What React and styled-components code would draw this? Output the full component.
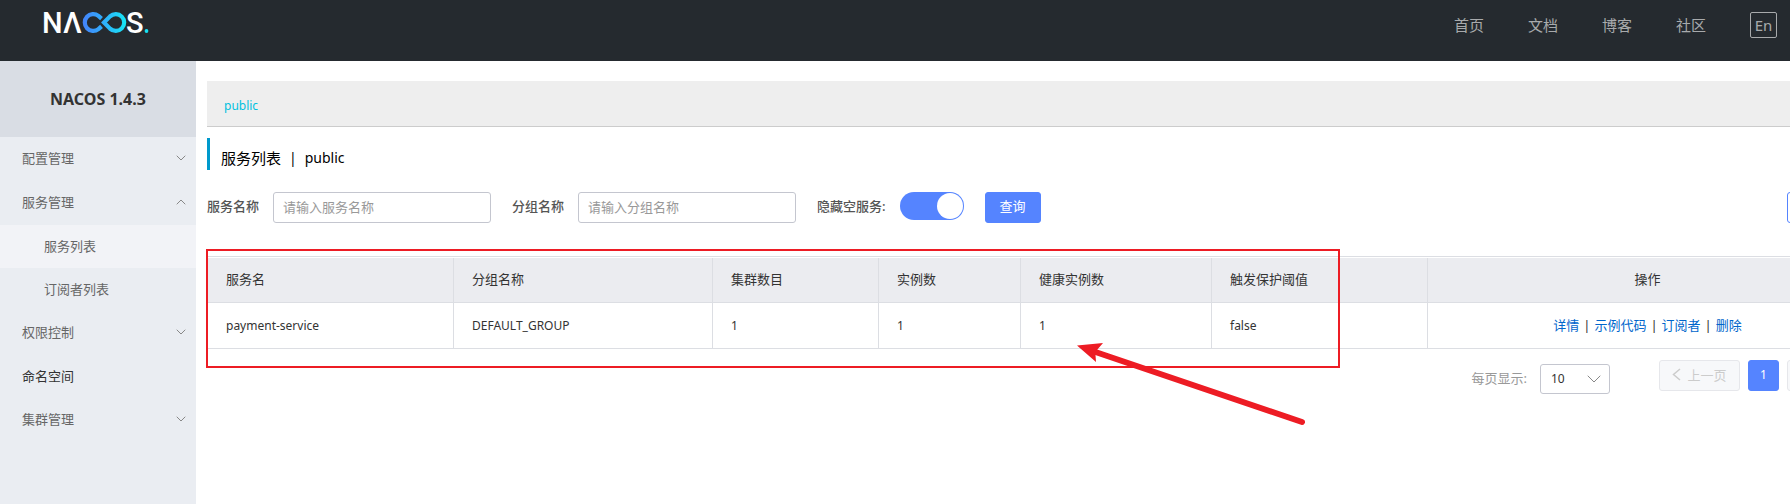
import React from "react";
import styled, { createGlobalStyle, css } from "styled-components";

const GlobalStyle = createGlobalStyle`
  *, *::before, *::after { box-sizing: border-box; }
  body {
    margin: 0;
    background: #fff;
    color: #333;
    font: 12px/20px "Noto Sans", "Noto Sans CJK SC", sans-serif;
  }
  button, input, select { font: inherit; }
  ul { margin: 0; padding: 0; list-style: none; }
  a { text-decoration: none; }
`;

const Page = styled.div`
  display: flex;
  flex-direction: column;
  min-height: 100vh;
  overflow: hidden;
`;

/* Top bar */
const Header = styled.header`
  display: flex;
  align-items: flex-start;
  justify-content: space-between;
  height: 61px;
  padding: 0 13px 0 36px;
  background: #252a2f;
`;

const HeaderNav = styled.nav`
  display: flex;
  align-items: center;
  gap: 44px;
  margin-top: 12px;
`;

const HeaderLink = styled.a`
  font-size: 15px;
  line-height: 26px;
  color: #a8aaac;
`;

const LanguageButton = styled.button`
  width: 27px;
  height: 26px;
  padding: 0;
  border: 1px solid #a8aaac;
  border-radius: 2px;
  background: transparent;
  color: #a8aaac;
  font-size: 15px;
  line-height: 22px;
`;

/* Side menu */
const Body = styled.div`
  display: flex;
  flex: 1;
`;

const Sidebar = styled.aside`
  flex: 0 0 196px;
  background: #eaedf2;
`;

const Version = styled.h1`
  margin: 0;
  background: #d9dde4;
  font-size: 16px;
  font-weight: 700;
  line-height: 76px;
  text-align: center;
`;

const menuRow = css`
  display: flex;
  align-items: center;
  justify-content: space-between;
  width: 100%;
  padding: 0 10px 2px 22px;
  border: 0;
  background: transparent;
  font-size: 13px;
  text-align: left;
`;

const MenuGroup = styled.button`
  ${menuRow}
  height: 44px;
  color: #666;
`;

const MenuLink = styled.a`
  ${menuRow}
  height: 43px;
  padding-left: ${(p) => (p.$nested ? "44px" : "22px")};
  background: ${(p) => (p.$active ? "#f2f3f7" : "transparent")};
  color: ${(p) => (p.$nested ? "#666" : "#333")};
`;

/* Content */
const Main = styled.main`
  flex: 1 0 1672px;
  padding: 20px 0 0 11px;
`;

const NamespaceBar = styled.div`
  display: flex;
  align-items: center;
  height: 46px;
  padding: 5px 17px 0;
  border-bottom: 1px solid #ccc;
  background: #eee;
`;

const NamespaceLink = styled.a`
  color: #00c1de;
`;

const PageTitle = styled.h2`
  display: flex;
  gap: 8px;
  height: 32px;
  margin: 11px 0 22px;
  padding: 6px 0 0 11px;
  border-left: 3px solid #09c;
  color: #000;
  font-size: 14px;
  font-weight: 400;
  line-height: 28px;
`;

const TitleName = styled.span`
  font-size: 15px;
`;

const SearchForm = styled.form`
  display: flex;
  align-items: flex-start;
  height: 31px;
`;

const Field = styled.div`
  display: flex;
  align-items: flex-start;
  gap: 14px;
  margin-right: 21px;
`;

const Label = styled.label`
  color: #555;
  font-size: 13px;
  font-weight: 500;
  line-height: 28px;
`;

const TextInput = styled.input`
  width: 218px;
  height: 31px;
  padding: 0 9px 2px;
  border: 1px solid #c4c6cf;
  border-radius: 3px;
  background: #fff;
  color: #333;
  font-size: 13px;
  outline: 0;
  &::placeholder { color: #999; opacity: 1; }
`;

const Switch = styled.input`
  appearance: none;
  display: flex;
  justify-content: flex-end;
  width: 64px;
  height: 28px;
  margin: 0;
  padding: 1px;
  border-radius: 14px;
  background: #5584ff;
  &::before {
    content: "";
    width: 26px;
    height: 26px;
    border-radius: 50%;
    background: #fff;
  }
`;

const Button = styled.button`
  height: 31px;
  padding: 0 14px 2px;
  border: 1px solid #5584ff;
  border-radius: 3px;
  background: ${(p) => (p.$primary ? "#5584ff" : "#fff")};
  color: ${(p) => (p.$primary ? "#fff" : "#5584ff")};
  font-size: 13px;
  line-height: 27px;
`;

const CreateButton = styled(Button)`
  width: 81px;
  margin-left: auto;
`;

const TableArea = styled.section`
  position: relative;
  margin-top: 33px;
`;

const Table = styled.table`
  width: 100%;
  padding-top: 1px;
  border: 1px solid #dcdee3;
  border-width: 1px 0 0 1px;
  border-spacing: 0;
  table-layout: fixed;
`;

const cell = css`
  padding: 0 18px;
  border: 1px solid #dcdee3;
  border-width: 0 1px 1px 0;
  text-align: ${(p) => (p.$center ? "center" : "left")};
`;

const HeadCell = styled.th`
  ${cell}
  width: ${(p) => (p.$width ? `${p.$width}px` : "auto")};
  height: 45px;
  padding-bottom: 2px;
  background: #ebecf0;
  font-size: 13px;
  font-weight: 400;
`;

const DataCell = styled.td`
  ${cell}
  height: 46px;
`;

const Actions = styled.div`
  display: flex;
  justify-content: center;
  gap: 4px;
  padding-bottom: 2px;
  font-size: 13px;
`;

const ActionLink = styled.a`
  color: #06c;
`;

const Highlight = styled.div`
  position: absolute;
  top: -7px;
  left: -1px;
  width: 1134px;
  height: 119px;
  border: 2px solid #ed1c24;
  pointer-events: none;
`;

const Arrow = styled.svg`
  position: absolute;
  top: 84px;
  left: 868px;
  pointer-events: none;
`;

const Pagination = styled.nav`
  display: flex;
  align-items: flex-start;
  justify-content: flex-end;
  gap: 8px;
  padding-top: 11px;
`;

const PageSize = styled.div`
  display: flex;
  align-items: center;
  gap: 13px;
  margin: 4px 41px 0 0;
`;

const PageSizeLabel = styled.label`
  padding-bottom: 2px;
  color: #999;
  font-size: 13px;
`;

const SelectBox = styled.div`
  display: grid;
  align-items: center;
  width: 70px;
  height: 30px;
  & > * { grid-area: 1 / 1; }
  & > svg { justify-self: end; margin-right: 9px; pointer-events: none; }
`;

const Select = styled.select`
  appearance: none;
  width: 100%;
  height: 30px;
  padding: 0 10px;
  border: 1px solid #c4c6cf;
  border-radius: 3px;
  background: #fff;
  color: #333;
`;

const PageButton = styled.button`
  display: flex;
  align-items: center;
  justify-content: center;
  gap: 6px;
  width: ${(p) => (p.$wide ? "81px" : "31px")};
  height: 31px;
  padding: 0 0 2px;
  border: 1px solid ${(p) => (p.$current ? "#5584ff" : "#e6e7eb")};
  border-radius: 3px;
  background: ${(p) => (p.$current ? "#5584ff" : "#f7f8fa")};
  color: ${(p) => (p.$current ? "#fff" : "#ccc")};
  font-size: ${(p) => (p.$current ? "12px" : "13px")};
`;

function Chevron({ up, width = 10, color = "#888" }) {
  const h = width / 2 + 1;
  const d = up
    ? `M1 ${h - 1}L${width / 2} 1L${width - 1} ${h - 1}`
    : `M1 1L${width / 2} ${h - 1}L${width - 1} 1`;
  return (
    <svg width={width} height={h} viewBox={`0 0 ${width} ${h}`} fill="none" stroke={color} strokeLinecap="round" aria-hidden="true">
      <path d={d} />
    </svg>
  );
}

function Logo() {
  return (
    <svg width="120" height="48" viewBox="36 0 120 48" role="img" aria-label="NACOS">
      <defs>
        <linearGradient id="loop" gradientUnits="userSpaceOnUse" x1="83" y1="0" x2="126" y2="0">
          <stop offset="0" stopColor="#4483fb" />
          <stop offset="0.5" stopColor="#2fb0fb" />
          <stop offset="1" stopColor="#16e6f5" />
        </linearGradient>
      </defs>
      <g fill="#fff" fontFamily="Roboto, sans-serif" fontSize="29" fontWeight="500">
        <text x="42" y="33">N</text>
        <text x="63" y="33">Λ</text>
        <text x="126" y="33">S</text>
      </g>
      <g fill="none" stroke="url(#loop)" strokeWidth="4.2">
        <path d="M101.5 18.6L98.4 15.9A8.4 8.4 0 1 0 98.4 29.1L101.5 26.4" />
        <path d="M104 22.5L110 16.4A8.4 8.4 0 1 1 110 28.6Z" />
      </g>
      <circle cx="146.5" cy="31" r="1.9" fill="#16e0f2" />
    </svg>
  );
}

const columns = [
  ["服务名", 246],
  ["分组名称", 259],
  ["集群数目", 166],
  ["实例数", 142],
  ["健康实例数", 191],
  ["触发保护阈值", 216],
];
const services = [["payment-service", "DEFAULT_GROUP", "1", "1", "1", "false"]];
const actions = ["详情", "示例代码", "订阅者", "删除"];

export default function App() {
  return (
    <Page>
      <GlobalStyle />
      <Header>
        <Logo />
        <HeaderNav>
          {["首页", "文档", "博客", "社区"].map((t) => (
            <HeaderLink href="#" key={t}>{t}</HeaderLink>
          ))}
          <LanguageButton type="button">En</LanguageButton>
        </HeaderNav>
      </Header>
      <Body>
        <Sidebar>
          <Version>NACOS 1.4.3</Version>
          <ul>
            <li><MenuGroup type="button" aria-expanded="false">配置管理<Chevron /></MenuGroup></li>
            <li>
              <MenuGroup type="button" aria-expanded="true">服务管理<Chevron up /></MenuGroup>
              <ul>
                <li><MenuLink href="#" $nested $active>服务列表</MenuLink></li>
                <li><MenuLink href="#" $nested>订阅者列表</MenuLink></li>
              </ul>
            </li>
            <li><MenuGroup type="button" aria-expanded="false">权限控制<Chevron /></MenuGroup></li>
            <li><MenuLink href="#">命名空间</MenuLink></li>
            <li><MenuGroup type="button" aria-expanded="false">集群管理<Chevron /></MenuGroup></li>
          </ul>
        </Sidebar>
        <Main>
          <NamespaceBar><NamespaceLink href="#">public</NamespaceLink></NamespaceBar>
          <PageTitle><TitleName>服务列表</TitleName><span>|</span><span>public</span></PageTitle>
          <SearchForm onSubmit={(e) => e.preventDefault()}>
            <Field>
              <Label htmlFor="service">服务名称</Label>
              <TextInput id="service" placeholder="请输入服务名称" />
            </Field>
            <Field>
              <Label htmlFor="group">分组名称</Label>
              <TextInput id="group" placeholder="请输入分组名称" />
            </Field>
            <Field>
              <Label htmlFor="hide-empty">隐藏空服务:</Label>
              <Switch id="hide-empty" type="checkbox" role="switch" defaultChecked />
            </Field>
            <Button type="submit" $primary>查询</Button>
            <CreateButton type="button" aria-label="创建服务" />
          </SearchForm>
          <TableArea>
            <Table>
              <thead>
                <tr>
                  {columns.map(([name, width]) => (
                    <HeadCell key={name} $width={width}>{name}</HeadCell>
                  ))}
                  <HeadCell $center>操作</HeadCell>
                </tr>
              </thead>
              <tbody>
                {services.map((row) => (
                  <tr key={row[0]}>
                    {row.map((value, i) => <DataCell key={i}>{value}</DataCell>)}
                    <DataCell>
                      <Actions>
                        {actions.map((name, i) => (
                          <React.Fragment key={name}>
                            {i > 0 && <span>|</span>}
                            <ActionLink href="#">{name}</ActionLink>
                          </React.Fragment>
                        ))}
                      </Actions>
                    </DataCell>
                  </tr>
                ))}
              </tbody>
            </Table>
            <Highlight />
            <Arrow width="234" height="90" viewBox="1075 340 234 90" aria-hidden="true">
              <path d="M1077 345.5L1103 343L1097 350L1095.5 355L1096 362Z" fill="#ed1c24" />
              <path d="M1094 351.5L1302 422" stroke="#ed1c24" strokeWidth="6" strokeLinecap="round" />
            </Arrow>
          </TableArea>
          <Pagination aria-label="分页">
            <PageSize>
              <PageSizeLabel htmlFor="page-size">每页显示:</PageSizeLabel>
              <SelectBox>
                <Select id="page-size" defaultValue="10"><option>10</option></Select>
                <Chevron width={14} />
              </SelectBox>
            </PageSize>
            <PageButton type="button" $wide disabled>
              <svg width="9" height="13" viewBox="0 0 9 13" fill="none" stroke="#ccc" strokeWidth="1.5" aria-hidden="true">
                <path d="M8 1L1.5 6.5L8 12" />
              </svg>
              上一页
            </PageButton>
            <PageButton type="button" $current>1</PageButton>
            <PageButton type="button" $wide disabled aria-label="下一页" />
          </Pagination>
        </Main>
      </Body>
    </Page>
  );
}
